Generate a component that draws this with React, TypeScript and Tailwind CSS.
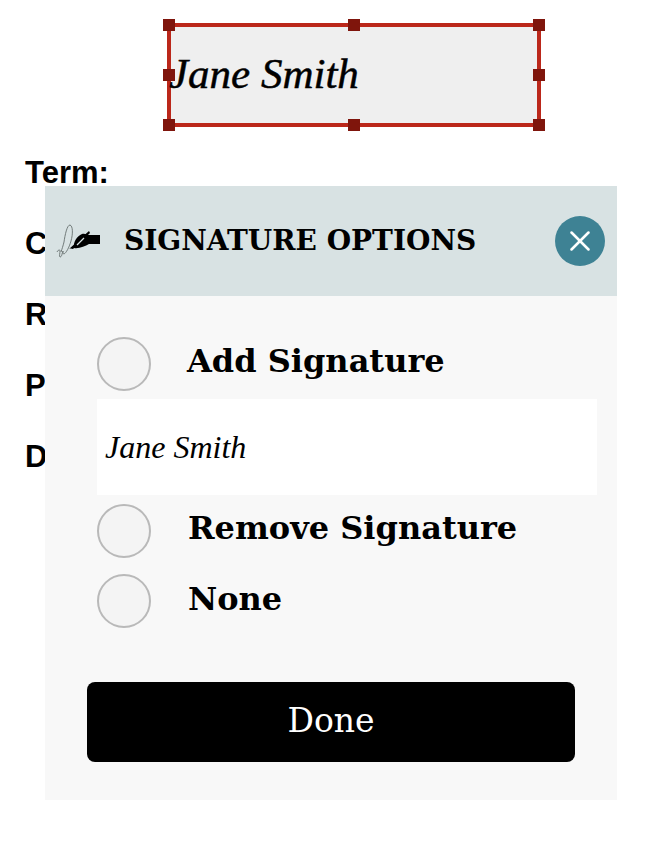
import { X } from "lucide-react";

const serif = "font-['DejaVu_Serif','Liberation_Serif',serif]";
const script = "font-['Liberation_Serif',serif] italic";

function Handle({ className }: { className: string }) {
  return <span className={`absolute h-3 w-3 bg-[#7f150c] ${className}`} />;
}

function Radio() {
  return <span className="h-[54px] w-[54px] shrink-0 rounded-full border-2 border-[#b9b9b9] bg-[#f4f4f4]" />;
}

function PenIcon() {
  return (
    <svg width="46" height="36" viewBox="0 0 46 36" className="shrink-0">
      <path
        d="M1 29c1-2 3-3 3-1 0 2-1 5 0 6 2 0 2-4 3-6 0 2 0 3 1 3 2-1 5-6 7-13 2-7 2-15-1-16-3 0-5 10-6 17-1 4-2 7-3 10"
        fill="none"
        stroke="#666f6e"
        strokeWidth="0.9"
      />
      <path d="M13 26 C15 25 16 26 17 26 L34 10 L33 8 Z" fill="#000" />
      <path d="M18 25 C17 19 21 13 26 11 C29 10 31 12 33 12 L44 12 L44 21 L33 21 C29 23 23 26 18 25 Z" fill="#000" />
      <path d="M21 22 L28 15" stroke="#d8e2e3" strokeWidth="1.2" />
    </svg>
  );
}

export default function App() {
  return (
    <div className="relative h-[852px] w-[671px] overflow-hidden bg-white">
      <div className="pt-[23px] pl-[167px]">
        <div className="relative flex h-[104px] w-[374px] items-center border-4 border-[#bb271a] bg-[#efefef]">
          <span className={`${script} -ml-[2px] -mt-[4px] text-[43px] leading-none text-black [-webkit-text-stroke:0.5px_black]`}>
            Jane Smith
          </span>
          <Handle className="-top-[8px] -left-[8px]" />
          <Handle className="-top-[8px] left-[177px]" />
          <Handle className="-top-[8px] -right-[8px]" />
          <Handle className="top-[42px] -left-[8px]" />
          <Handle className="top-[42px] -right-[8px]" />
          <Handle className="-bottom-[8px] -left-[8px]" />
          <Handle className="-bottom-[8px] left-[177px]" />
          <Handle className="-bottom-[8px] -right-[8px]" />
        </div>
      </div>

      <div className="mt-[29px] flex flex-col gap-[37px] pl-[25px] font-['Liberation_Sans',sans-serif] text-[31px] leading-[34px] font-bold text-black">
        <div>Term:</div>
        <div>C</div>
        <div>R</div>
        <div>P</div>
        <div>D</div>
      </div>

      {/* dialog sits over the page text */}
      <div className="absolute top-[186px] left-[45px] h-[614px] w-[572px] bg-[#f8f8f8]">
        <div className="flex h-[110px] items-center bg-[#d8e2e3] pr-[12px] pl-[11px]">
          <PenIcon />
          <span className={`${serif} ml-[22px] flex-1 text-[28px] font-bold whitespace-nowrap text-black`}>
            SIGNATURE OPTIONS
          </span>
          <button className="flex h-[50px] w-[50px] items-center justify-center rounded-full bg-[#3e8294] text-white">
            <X size={34} strokeWidth={1.8} />
          </button>
        </div>

        <div className="flex flex-col pt-[41px] pl-[52px]">
          <div className="flex items-center gap-[36px]">
            <Radio />
            <span className={`${serif} -mt-[6px] text-[32px] leading-none font-bold text-black`}>Add Signature</span>
          </div>
          <div className="mt-[8px] flex h-[96px] w-[500px] items-center bg-white pl-[8px]">
            <span className={`${script} text-[32px] leading-none text-black`}>Jane Smith</span>
          </div>
          <div className="mt-[9px] flex items-center gap-[37px]">
            <Radio />
            <span className={`${serif} -mt-[6px] text-[32px] leading-none font-bold text-black`}>Remove Signature</span>
          </div>
          <div className="mt-[16px] flex items-center gap-[37px]">
            <Radio />
            <span className={`${serif} -mt-[4px] text-[32px] leading-none font-bold text-black`}>None</span>
          </div>
        </div>

        <div className="mt-[54px] px-[42px]">
          <button className={`${serif} h-[80px] w-[488px] rounded-lg bg-black pb-[2px] text-[33px] text-white`}>Done</button>
        </div>
      </div>
    </div>
  );
}
